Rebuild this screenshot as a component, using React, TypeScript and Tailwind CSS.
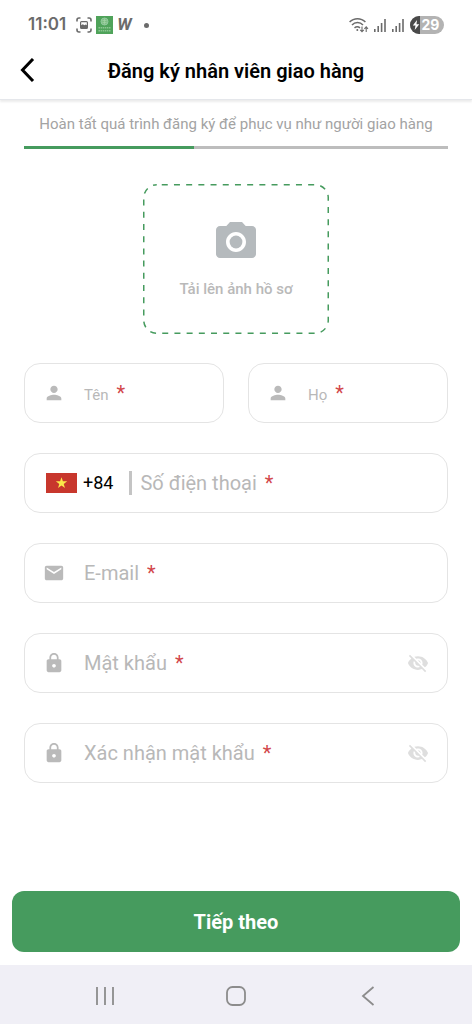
import { useState } from 'react';
import type { ReactNode } from 'react';
import { MdCameraAlt, MdEmail, MdLock, MdPerson, MdVisibilityOff } from 'react-icons/md';

const STEP = 2;
const TOTAL_STEPS = 5;

export default function App() {
  return (
    <div className="flex min-h-screen flex-col bg-white font-[Roboto,sans-serif] text-black">
      <StatusBar />

      <header className="relative flex h-[50px] items-center justify-center border-b border-gray-200 pb-2 shadow-[0_2px_2px_rgba(0,0,0,0.08)]">
        <button type="button" aria-label="Quay lại" className="absolute left-4 top-1 p-1">
          <svg width="16" height="24" viewBox="0 0 16 24" fill="none" stroke="currentColor" strokeWidth="3">
            <path d="M13 1 2.5 12 13 23" />
          </svg>
        </button>
        <h1 className="text-xl font-semibold leading-6">Đăng ký nhân viên giao hàng</h1>
      </header>

      <main className="flex flex-1 flex-col px-6 pt-3">
        <p className="whitespace-nowrap text-center text-[15px] leading-6 text-[#a3a3a3]">
          Hoàn tất quá trình đăng ký để phục vụ như người giao hàng
        </p>
        <div className="mt-[10px] h-[3px] bg-[#bdbdbd]">
          <div className="h-full bg-[#469b5e]" style={{ width: `${(STEP / TOTAL_STEPS) * 100}%` }} />
        </div>

        <UploadBox />

        <form id="register" className="mt-[29px] flex flex-col gap-[30px]" onSubmit={(e) => e.preventDefault()}>
          <div className="grid grid-cols-2 gap-6">
            <Field id="firstName" label="Tên" small icon={<MdPerson size={22} />} />
            <Field id="lastName" label="Họ" small icon={<MdPerson size={22} />} />
          </div>
          <Field id="phone" label="Số điện thoại" type="tel" prefix={<CountryCode />} />
          <Field id="email" label="E-mail" type="email" icon={<MdEmail size={22} />} />
          <PasswordField id="password" label="Mật khẩu" />
          <PasswordField id="confirm" label="Xác nhận mật khẩu" />
        </form>
      </main>

      <div className="px-3 py-[13px]">
        <button
          type="submit"
          form="register"
          className="h-[61px] w-full rounded-xl bg-[#469b5e] text-xl font-bold text-white"
        >
          Tiếp theo
        </button>
      </div>

      <NavBar />
    </div>
  );
}

function UploadBox() {
  return (
    <label className="relative mt-[35px] flex h-[150px] w-[186px] cursor-pointer flex-col items-center self-center pt-[34px]">
      <svg className="absolute inset-0" width="186" height="150" viewBox="0 0 186 150" fill="none">
        <rect
          x="0.75"
          y="0.75"
          width="184.5"
          height="148.5"
          rx="13"
          stroke="#469b5e"
          strokeWidth="1.5"
          strokeDasharray="6 6.2"
          strokeDashoffset="-5"
        />
      </svg>
      <MdCameraAlt size={48} className="text-[#b5babd]" />
      <span className="mt-[13px] text-[15px] font-medium leading-5 text-[#b9b9b9]">Tải lên ảnh hồ sơ</span>
      <input type="file" accept="image/*" className="sr-only" />
    </label>
  );
}

type FieldProps = {
  id: string;
  label: string;
  type?: string;
  small?: boolean;
  icon?: ReactNode;
  prefix?: ReactNode;
  suffix?: ReactNode;
};

function Field({ id, label, type = 'text', small, icon, prefix, suffix }: FieldProps) {
  return (
    <div className="flex h-[60px] items-center rounded-2xl border border-[#e4e4e4] px-[18px]">
      {icon && <span className="mr-[19px] text-[#bababa]">{icon}</span>}
      {prefix}
      <div className="relative min-w-0 flex-1">
        <input id={id} type={type} placeholder=" " className="peer h-10 w-full bg-transparent text-xl outline-none" />
        {/* stands in for the placeholder so the asterisk can be red */}
        <label
          htmlFor={id}
          className="pointer-events-none invisible absolute inset-0 flex items-center gap-2 whitespace-nowrap text-xl text-[#b8b8b8] peer-placeholder-shown:visible"
        >
          <span className={small ? 'pt-1 text-[15px]' : ''}>{label}</span>
          <span className="text-[#d2474b]">*</span>
        </label>
      </div>
      {suffix}
    </div>
  );
}

function PasswordField({ id, label }: { id: string; label: string }) {
  const [visible, setVisible] = useState(false);
  return (
    <Field
      id={id}
      label={label}
      type={visible ? 'text' : 'password'}
      icon={<MdLock size={22} />}
      suffix={
        <button
          type="button"
          aria-label="Hiện mật khẩu"
          onClick={() => setVisible((v) => !v)}
          className="text-[#dedede]"
        >
          <MdVisibilityOff size={22} />
        </button>
      }
    />
  );
}

function CountryCode() {
  return (
    <div className="ml-[3px] mr-2 flex items-center">
      <button type="button" className="flex items-center gap-[6px] text-lg leading-6">
        <svg width="31" height="20" viewBox="0 0 31 20">
          <rect width="31" height="20" fill="#c8372d" />
          <path
            fill="#fbe84a"
            d="M15.5 4.2l1.4 4.1h4.3l-3.5 2.6 1.3 4.1-3.5-2.5-3.5 2.5 1.3-4.1-3.5-2.6h4.3z"
          />
        </svg>
        +84
      </button>
      <span className="ml-4 h-6 w-[3px] bg-[#c4c4c4]" />
    </div>
  );
}

function StatusBar() {
  return (
    <div className="flex h-[50px] items-center justify-between px-7 text-[#6b6b6b]">
      <div className="flex items-center">
        <span className="font-[Inter,sans-serif] text-[17px] font-semibold">11:01</span>
        <svg className="ml-[10px]" width="16" height="16" viewBox="0 0 16 16" fill="none" stroke="currentColor" strokeWidth="1.6">
          <path d="M1 4.5V3a2 2 0 0 1 2-2h1.5M11.5 1H13a2 2 0 0 1 2 2v1.5M15 11.5V13a2 2 0 0 1-2 2h-1.5M4.5 15H3a2 2 0 0 1-2-2v-1.5" />
          <path d="M5.500 4h5a1.500 1.500 0 0 1 1.500 1.500v5a1.500 1.500 0 0 1-1.500 1.500h-5A1.500 1.500 0 0 1 4 10.500v-5A1.500 1.500 0 0 1 5.500 4zM5.200 5.200v3l1.600-1 1.700 1 1-.7 1.300.8V5.200z" fill="currentColor" fillRule="evenodd" stroke="none" />
        </svg>
        <svg className="ml-1" width="17" height="18" viewBox="0 0 17 18" fill="none">
          <rect width="17" height="18" fill="#4fa35a" />
          <circle cx="8.5" cy="5.5" r="3.5" fill="#7fbf85" stroke="#93caa0" />
          <path d="M6.5 4.5h4M6.5 6.5h4M8.5 2.5v6" stroke="#a5d3a8" strokeWidth="0.7" />
          <path d="M2.5 11.7h12M2.5 14.7h12" stroke="#8cc692" strokeWidth="1.6" strokeDasharray="1.5 0.6" />
        </svg>
        <span className="ml-1 text-[17px] font-bold italic">W</span>
        <span className="ml-3 size-[5px] rounded-full bg-current" />
      </div>

      <div className="flex items-center">
        <svg className="mr-[5px]" width="20" height="16" viewBox="0 0 20 16" fill="none" stroke="currentColor" strokeWidth="1.5">
          <path d="M.6 5a11 11 0 0 1 15.8 0M3 8a7.5 7.5 0 0 1 11 0M5.5 10.800a4.300 4.300 0 0 1 5.500 0" />
          <circle cx="8.3" cy="13" r="1" fill="currentColor" stroke="none" />
          <path d="M13 9.5v5M11.2 12.8l1.8 1.9 1.8-1.9M17.2 15v-5M15.4 11.800l1.800-1.900 1.800 1.900" strokeWidth="1.1" />
        </svg>
        <Signal />
        <Signal />
        <div className="flex h-[18px] items-center overflow-hidden rounded-full bg-[#b3b3b3]">
          <span className="flex h-full w-[10px] items-center justify-end bg-[#4a4a4a]">
            <svg width="8" height="10" viewBox="0 0 8 10" fill="white">
              <path d="M5 0 .8 5.6h2.7L2.7 10 7.3 4.3H4.5z" />
            </svg>
          </span>
          <span className="w-6 pr-[3px] text-center font-[Inter,sans-serif] text-sm font-bold text-white">29</span>
        </div>
      </div>
    </div>
  );
}

function Signal() {
  return (
    <svg className="mr-[6px]" width="12" height="13" viewBox="0 0 12 13" fill="currentColor">
      <rect x="0" y="10" width="1.6" height="3" />
      <rect x="3.4" y="7" width="1.6" height="6" />
      <rect x="6.8" y="4" width="1.6" height="9" />
      <rect x="10.2" y="0" width="1.6" height="13" />
    </svg>
  );
}

function NavBar() {
  return (
    <nav className="grid h-[59px] grid-cols-[1fr_54px_1fr] items-center bg-[#f0eff6] pt-[2px] text-[#8c8c8c]">
      <button type="button" aria-label="Gần đây" className="justify-self-center">
        <svg width="20" height="20" viewBox="0 0 20 20" fill="none" stroke="currentColor" strokeWidth="1.8">
          <path d="M2 1v18M10 1v18M18 1v18" />
        </svg>
      </button>
      <button type="button" aria-label="Trang chủ" className="justify-self-center">
        <svg width="20" height="20" viewBox="0 0 20 20" fill="none" stroke="currentColor" strokeWidth="1.8">
          <rect x="1" y="1" width="18" height="18" rx="5.5" />
        </svg>
      </button>
      <button type="button" aria-label="Quay lại" className="justify-self-center">
        <svg width="14" height="20" viewBox="0 0 14 20" fill="none" stroke="currentColor" strokeWidth="1.8">
          <path d="M12.5 1 2 10l10.5 9" />
        </svg>
      </button>
    </nav>
  );
}
